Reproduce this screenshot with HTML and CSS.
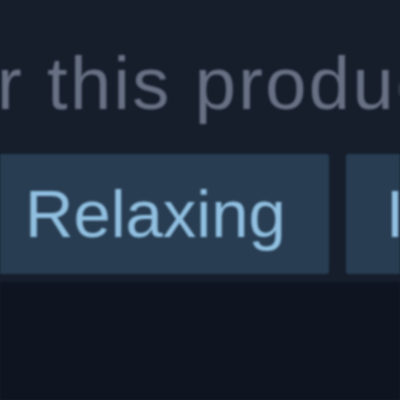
FILE: index.html
```html
<!DOCTYPE html>
<html>
<head>
<meta charset="utf-8">
<link rel="stylesheet" href="styles.css">
</head>
<body>
<div class="page">
  <div class="heading"><span class="clip">Popular user-defined tags fo</span>r this product:</div>
  <div class="tags">
    <div class="tag first">Relaxing</div>
    <div class="tag">Indie</div>
  </div>
  <div class="footer"></div>
</div>
</body>
</html>
```

FILE: styles.css
```css
html, body {
  margin: 0;
  padding: 0;
  width: 400px;
  height: 400px;
  overflow: hidden;
  background: #161e2c;
}
.page {
  width: 400px;
  height: 400px;
  overflow: hidden;
  display: flex;
  flex-direction: column;
  font-family: "Liberation Sans", Arial, sans-serif;
  filter: blur(0.9px);
}
.heading {
  white-space: nowrap;
  font-size: 74px;
  line-height: 80px;
  letter-spacing: 2.4px;
  color: #687184;
  margin-top: 44px;
  margin-left: -3px;
  display: flex;
  justify-content: flex-start;
}
.clip {
  display: none;
}
.tags {
  display: flex;
  gap: 17px;
  margin-top: 30px;
  margin-left: -40px;
  white-space: nowrap;
}
.tag {
  background: #283d52;
  color: #90bfe0;
  font-size: 67px;
  height: 120px;
  line-height: 120px;
  padding: 0 43px 0 40px;
  border-radius: 3px;
}
.tag.first {
  padding-left: 65px;
}
.footer {
  flex: 1;
  background: #0e1520;
  margin-top: 8px;
}
```
